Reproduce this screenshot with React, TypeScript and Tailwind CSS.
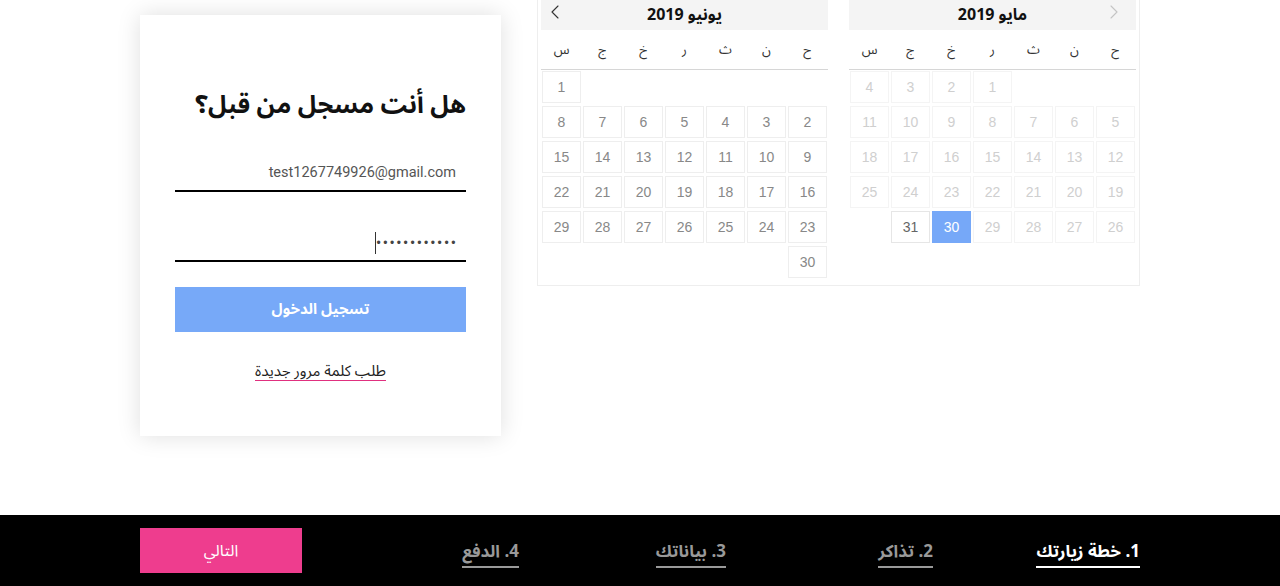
import { ChevronLeft, ChevronRight } from 'lucide-react'

type Day = { n: number | null; state?: 'normal' | 'off' | 'selected' | 'today' }

const weekDays = ['ح', 'ن', 'ث', 'ر', 'خ', 'ج', 'س']

const range = (a: number, b: number, state: Day['state'] = 'normal'): Day[] =>
  Array.from({ length: b - a + 1 }, (_, i) => ({ n: a + i, state }))
const blanks = (k: number): Day[] => Array.from({ length: k }, () => ({ n: null }))

const may: Day[][] = [
  [...blanks(3), ...range(1, 4, 'off')],
  range(5, 11, 'off'),
  range(12, 18, 'off'),
  range(19, 25, 'off'),
  [...range(26, 29, 'off'), { n: 30, state: 'selected' }, { n: 31, state: 'today' }, ...blanks(1)],
]

const june: Day[][] = [
  [...blanks(6), { n: 1 }],
  range(2, 8),
  range(9, 15),
  range(16, 22),
  range(23, 29),
  [{ n: 30 }, ...blanks(6)],
]

const arabic = { fontFamily: '"Noto Sans Arabic", "Noto Kufi Arabic", "DejaVu Sans", sans-serif' }
const latin = { fontFamily: '"Liberation Sans", Arial, sans-serif' }

const Cell = ({ day }: { day: Day }) => {
  if (day.n === null) return <div className="mx-px h-[32px]" />
  const cls =
    day.state === 'selected'
      ? 'bg-[#76a8f8] text-white border-[#76a8f8]'
      : day.state === 'off'
        ? 'text-[#cfcfcf] border-[#f4f4f4]'
        : day.state === 'today'
          ? 'text-[#666] border-[#e6e6e6]'
          : 'text-[#888] border-[#eeeeee]'
  return (
    <div
      className={`mx-px flex h-[32px] items-center justify-center border pt-[1px] text-[14px] ${cls}`}
      style={latin}
    >
      {day.n}
    </div>
  )
}

const Month = ({
  title,
  rows,
  arrow,
}: {
  title: string
  rows: Day[][]
  arrow: 'prev' | 'next'
}) => (
  <div className="w-[287px]">
    <div className="relative flex h-[30px] items-center justify-center bg-[#f4f4f4]">
      <span className="text-[16px] font-bold leading-[28px] text-[#111]">{title}</span>
      {arrow === 'next' ? (
        <ChevronLeft className="absolute left-[2px] top-0 h-[24px] w-[24px] text-[#333]" strokeWidth={1.1} />
      ) : (
        <ChevronRight className="absolute right-[10px] top-0 h-[24px] w-[24px] text-[#c4c4c4]" strokeWidth={1.1} />
      )}
    </div>
    <div className="grid h-[40px] grid-cols-7 items-center border-b border-[#d6d6d6]">
      {weekDays.map((d) => (
        <div key={d} className="pt-[2px] text-center text-[13px] text-[#333]">
          {d}
        </div>
      ))}
    </div>
    <div className="mt-[1px] grid grid-cols-7 gap-y-[3px]">
      {rows.flat().map((day, i) => (
        <Cell key={i} day={day} />
      ))}
    </div>
  </div>
)

const steps = [
  { label: '1. خطة زيارتك', active: true },
  { label: '2. تذاكر', active: false },
  { label: '3. بياناتك', active: false },
  { label: '4. الدفع', active: false },
]

export default function App() {
  return (
    <div dir="rtl" className="h-[586px] w-[1280px] overflow-hidden bg-white" style={arabic}>
      <div className="mx-auto flex h-[515px] w-[1000px] items-start justify-between">
        <div className="flex gap-[21px] border border-t-0 border-[#eeeeee] px-[3px] pb-[7px]">
          <Month title="مايو 2019" rows={may} arrow="prev" />
          <Month title="يونيو 2019" rows={june} arrow="next" />
        </div>

        <div className="mt-[15px] flex h-[421px] w-[361px] flex-col bg-white px-[35px] shadow-[0_0_22px_rgba(0,0,0,0.13)]">
          <h2 className="mt-[72px] whitespace-nowrap text-[25px] font-bold leading-[36px] text-[#111]">
            هل أنت مسجل من قبل؟
          </h2>
          <div
            className="mt-[32px] flex h-[37px] items-center border-b-2 border-black pr-[10px] text-[14.5px] text-[#555]"
            style={{ fontFamily: 'Roboto, sans-serif' }}
          >
            test1267749926@gmail.com
          </div>
          <div
            className="mt-[33px] flex h-[37px] items-center border-b-2 border-black pr-[8px] text-[12px] tracking-[2.6px] text-[#444]"
            style={latin}
          >
            <span>••••••••••••</span>
            <span className="h-[22px] w-px bg-[#333]" />
          </div>
          <button className="mt-[25px] h-[45px] w-full bg-[#77a9f8] text-[15px] font-bold text-white">
            تسجيل الدخول
          </button>
          <div className="mt-[27px] text-center">
            <span className="inline-block border-b border-[#e0307f] text-[15px] leading-[18px] text-[#222]">
              طلب كلمة مرور جديدة
            </span>
          </div>
        </div>
      </div>

      <div className="h-[71px] bg-black">
        <div className="mx-auto flex h-full w-[1000px] items-center">
          {steps.map((s) => (
            <div key={s.label} className="flex w-[207px] justify-start">
              <span
                className={`mt-[5px] border-b-2 text-[17px] font-bold leading-[28px] ${
                  s.active ? 'border-white text-white' : 'border-[#999] text-[#999]'
                }`}
              >
                {s.label}
              </span>
            </div>
          ))}
          <button className="mr-auto h-[45px] w-[162px] bg-[#ee3d8e] text-[16px] text-white">التالي</button>
        </div>
      </div>
    </div>
  )
}
